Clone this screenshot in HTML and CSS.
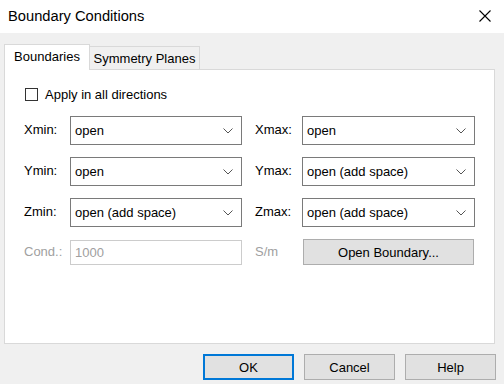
FILE: index.html
```html
<!DOCTYPE html>
<html>
<head>
<meta charset="utf-8">
<link rel="stylesheet" href="styles.css">
</head>
<body>
<div class="dialog">
  <div class="titlebar">
    <span class="title">Boundary Conditions</span>
    <svg class="close" width="12" height="12" viewBox="0 0 12 12"><path d="M0.5 0.5 L11.5 11.5 M11.5 0.5 L0.5 11.5" stroke="#000" stroke-width="1.1" fill="none"/></svg>
  </div>
  <div class="tabs">
    <div class="tab active">Boundaries</div>
    <div class="tab">Symmetry Planes</div>
  </div>
  <div class="panel">
    <label class="check"><span class="box"></span><span>Apply in all directions</span></label>
    <div class="form">
      <span class="lbl">Xmin:</span>
      <div class="combo"><span>open</span><svg width="10" height="6" viewBox="0 0 10 6"><polyline points="0.5,0.5 5,5 9.5,0.5" fill="none" stroke="#555" stroke-width="1"/></svg></div>
      <span></span>
      <span class="lbl">Xmax:</span>
      <div class="combo"><span>open</span><svg width="10" height="6" viewBox="0 0 10 6"><polyline points="0.5,0.5 5,5 9.5,0.5" fill="none" stroke="#555" stroke-width="1"/></svg></div>

      <span class="lbl">Ymin:</span>
      <div class="combo"><span>open</span><svg width="10" height="6" viewBox="0 0 10 6"><polyline points="0.5,0.5 5,5 9.5,0.5" fill="none" stroke="#555" stroke-width="1"/></svg></div>
      <span></span>
      <span class="lbl">Ymax:</span>
      <div class="combo"><span>open (add space)</span><svg width="10" height="6" viewBox="0 0 10 6"><polyline points="0.5,0.5 5,5 9.5,0.5" fill="none" stroke="#555" stroke-width="1"/></svg></div>

      <span class="lbl">Zmin:</span>
      <div class="combo"><span>open (add space)</span><svg width="10" height="6" viewBox="0 0 10 6"><polyline points="0.5,0.5 5,5 9.5,0.5" fill="none" stroke="#555" stroke-width="1"/></svg></div>
      <span></span>
      <span class="lbl">Zmax:</span>
      <div class="combo"><span>open (add space)</span><svg width="10" height="6" viewBox="0 0 10 6"><polyline points="0.5,0.5 5,5 9.5,0.5" fill="none" stroke="#555" stroke-width="1"/></svg></div>

      <span class="lbl disabled">Cond.:</span>
      <div class="field">1000</div>
      <span></span>
      <span class="lbl disabled">S/m</span>
      <div class="btn wide">Open Boundary...</div>
    </div>
  </div>
  <div class="footer">
    <div class="btn default">OK</div>
    <div class="btn">Cancel</div>
    <div class="btn">Help</div>
  </div>
</div>
</body>
</html>
```

FILE: styles.css
```css
* { box-sizing: border-box; }
html, body {
  margin: 0;
  padding: 0;
  background: #f0f0f0;
}
body {
  width: 504px;
  height: 384px;
  overflow: hidden;
  font-family: "Liberation Sans", Arial, sans-serif;
  font-size: 13px;
  color: #000;
}
.dialog {
  width: 504px;
  height: 384px;
  display: flex;
  flex-direction: column;
}
.titlebar {
  height: 33px;
  background: #fff;
  display: flex;
  align-items: center;
  justify-content: space-between;
  padding: 0 13px 2px 8px;
}
.title {
  font-size: 14.7px;
}
.close {
  display: block;
}
.tabs {
  margin-top: 11px;
  margin-left: 4px;
  height: 25px;
  display: flex;
  align-items: flex-end;
}
.tab {
  height: 23px;
  width: 110px;
  border: 1px solid #d9d9d9;
  border-bottom: none;
  border-left: none;
  background: #f0f0f0;
  display: flex;
  align-items: center;
  justify-content: center;
  padding-top: 1px;
}
.tab.active {
  width: 86px;
  height: 26px;
  border-left: 1px solid #d9d9d9;
  background: #fff;
  margin-bottom: -1px;
  position: relative;
  z-index: 1;
  padding-top: 0;
  padding-bottom: 2px;
}
.panel {
  margin-left: 4px;
  width: 491px;
  height: 275px;
  border: 1px solid #d9d9d9;
  background: #fff;
  padding: 17px 20px 0 19px;
}
.check {
  height: 15px;
  display: flex;
  align-items: center;
  gap: 7px;
}
.box {
  width: 13px;
  height: 13px;
  border: 1px solid #333;
  background: #fff;
  margin-left: 1px;
}
.form {
  margin-top: 14px;
  display: grid;
  grid-template-columns: 46px 172px 13px 47px 173px;
  grid-template-rows: 29px 29px 29px 26px;
  row-gap: 12px;
  align-items: center;
}
.lbl {
  padding-bottom: 2px;
}
.disabled {
  color: #a0a0a0;
}
.combo {
  height: 29px;
  border: 1px solid #7a7a7a;
  background: #fff;
  display: flex;
  align-items: center;
  justify-content: space-between;
  padding: 0 8px 0 4px;
}
.combo svg {
  display: block;
  margin-top: 1px;
}
.field {
  height: 25px;
  align-self: end;
  border: 1px solid #cccccc;
  background: #fff;
  color: #a0a0a0;
  display: flex;
  align-items: center;
  padding-left: 4px;
}
.btn {
  height: 26px;
  width: 91px;
  background: #e1e1e1;
  border: 1px solid #adadad;
  display: flex;
  align-items: center;
  justify-content: center;
}
.btn.wide {
  width: 171px;
  margin-left: 1px;
}
.btn.default {
  border: 2px solid #0078d7;
}
.footer {
  margin-top: 10px;
  display: flex;
  justify-content: flex-end;
  gap: 10px;
  padding-right: 8px;
}
```
